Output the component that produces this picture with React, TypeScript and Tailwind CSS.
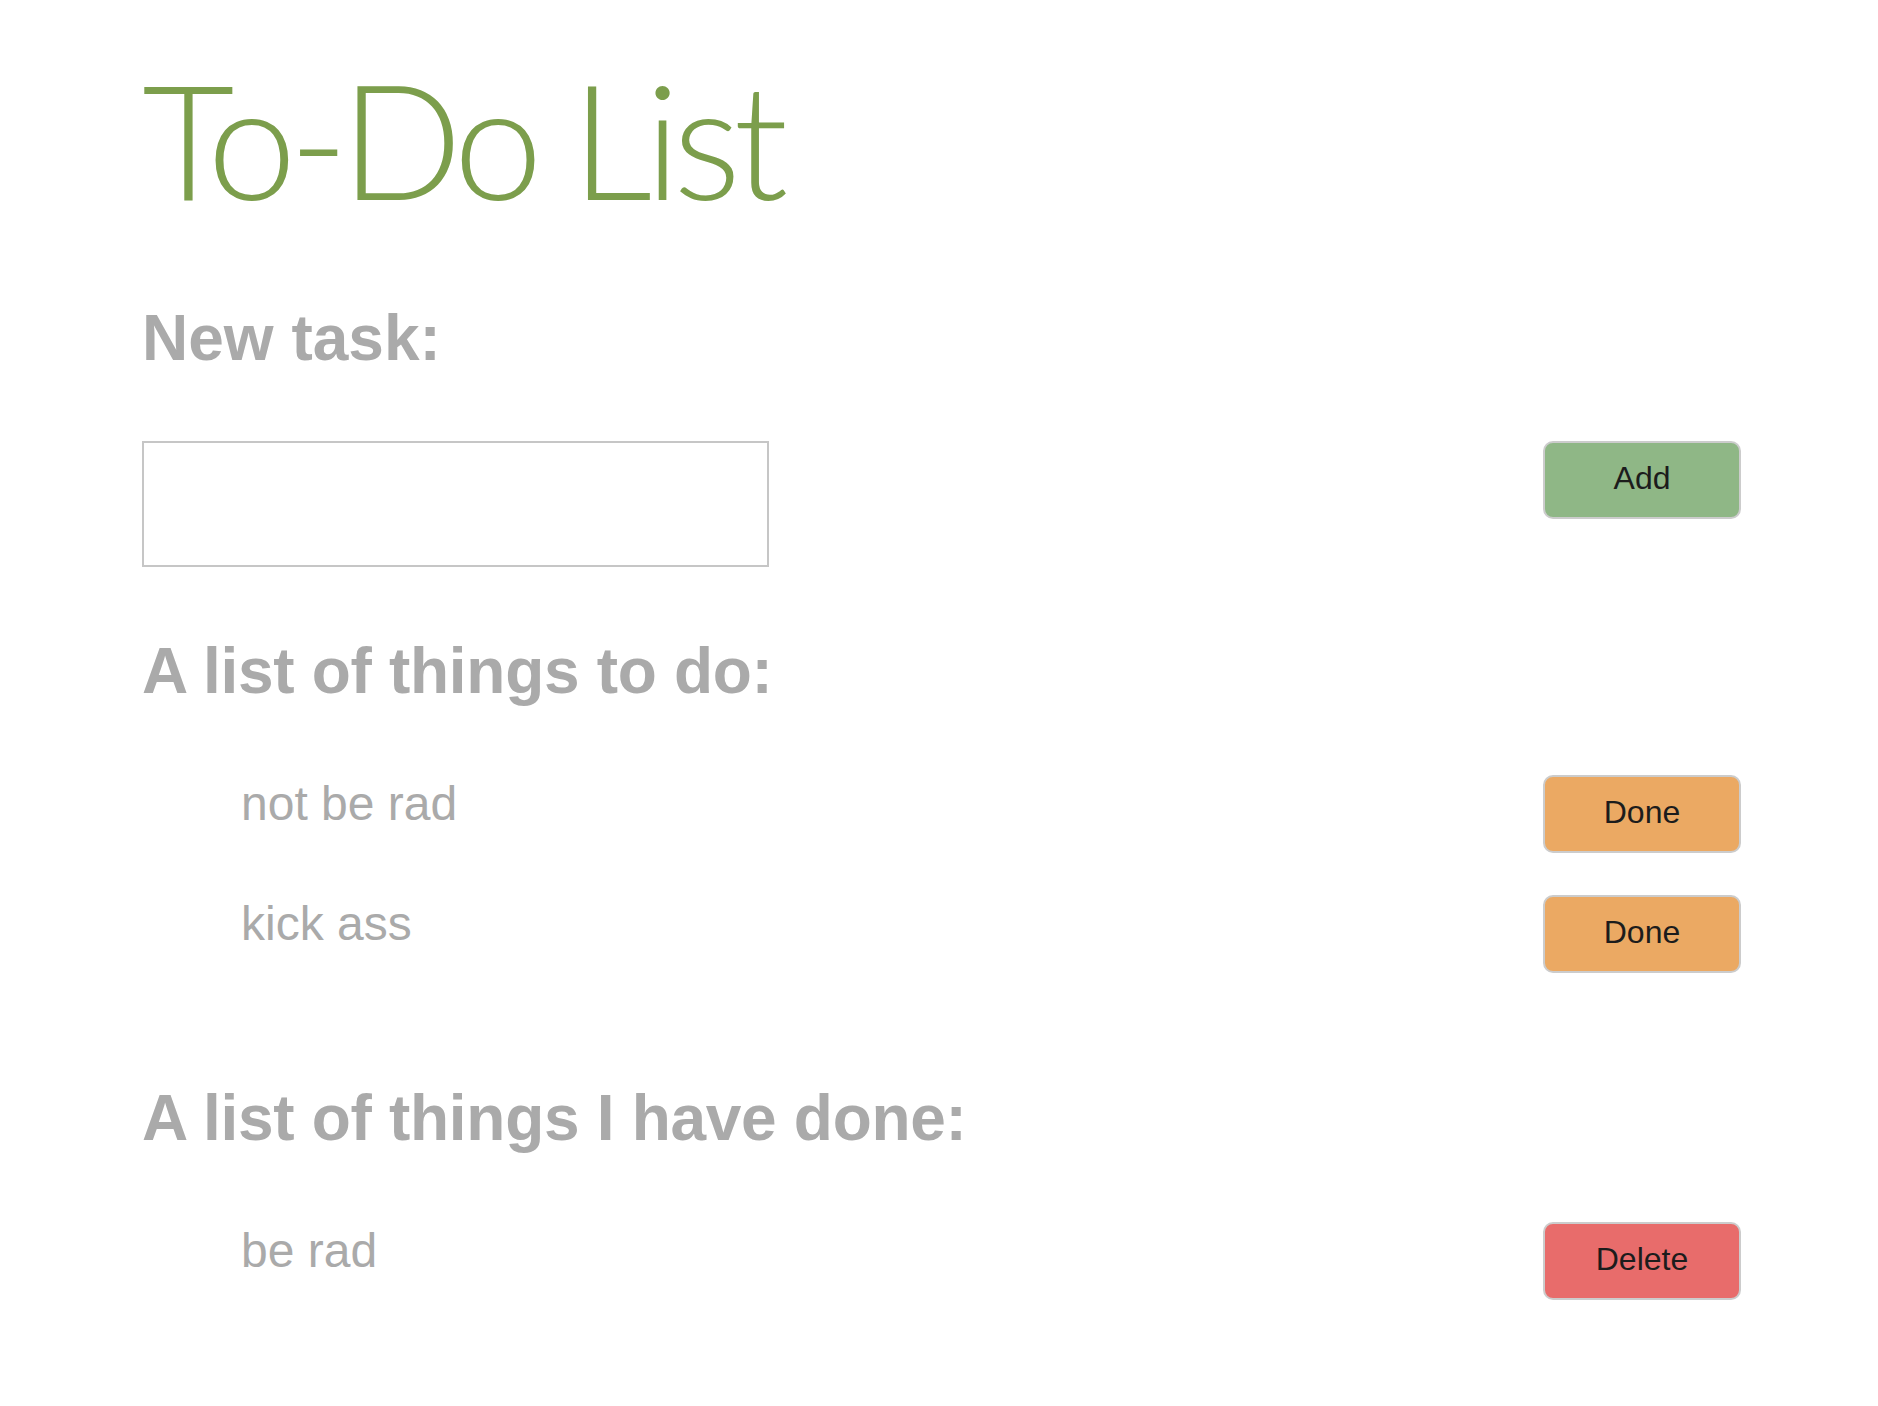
import React from 'react';

const sans = { fontFamily: '"Liberation Sans", Arial, sans-serif' };

export default function App() {
  const todo = ['not be rad', 'kick ass'];
  const done = ['be rad'];

  return (
    <div className="min-h-screen bg-white pl-[142px] pr-[137px]" style={sans}>
      <h1 className="pt-[58px] text-[160px] leading-none font-light tracking-[-7.5px] text-[#7c9e4c] font-['Lato',sans-serif]">
        To-Do List
      </h1>

      {/* Nieuwe taak */}
      <h2 className="mt-[88px] text-[64px] leading-none font-bold text-[#aaaaaa]">New task:</h2>
      <div className="mt-[71px] flex items-start justify-between">
        <input type="text" className="h-[126px] w-[627px] border-2 border-[#c6c6c6] bg-white outline-none" />
        <ActionButton label="Add" color="bg-[#8fb786]" />
      </div>

      <h2 className="mt-[72px] text-[64px] leading-none font-bold tracking-[-0.3px] text-[#aaaaaa]">A list of things to do:</h2>
      <ul className="mt-[72px] flex flex-col gap-[42px]">
        {todo.map((t) => (
          <TaskRow key={t} text={t} button={<ActionButton label="Done" color="bg-[#eba963]" />} />
        ))}
      </ul>

      <h2 className="mt-[113px] text-[64px] leading-none font-bold tracking-[-0.3px] text-[#aaaaaa]">A list of things I have done:</h2>
      <ul className="mt-[72px] flex flex-col gap-[42px]">
        {done.map((t) => (
          <TaskRow key={t} text={t} button={<ActionButton label="Delete" color="bg-[#e86c6b]" />} />
        ))}
      </ul>
    </div>
  );
}

function TaskRow({ text, button }: { text: string; button: React.ReactNode }) {
  return (
    <li className="flex items-start justify-between">
      <span className="mt-[5px] pl-[99px] text-[48px] leading-none text-[#aaaaaa]">{text}</span>
      {button}
    </li>
  );
}

function ActionButton({ label, color }: { label: string; color: string }) {
  return (
    <button className={`${color} h-[78px] w-[198px] rounded-[10px] border-2 border-[#cccccc] pb-[4px] text-[32px] leading-none text-[#1c1c1c]`}>
      {label}
    </button>
  );
}
